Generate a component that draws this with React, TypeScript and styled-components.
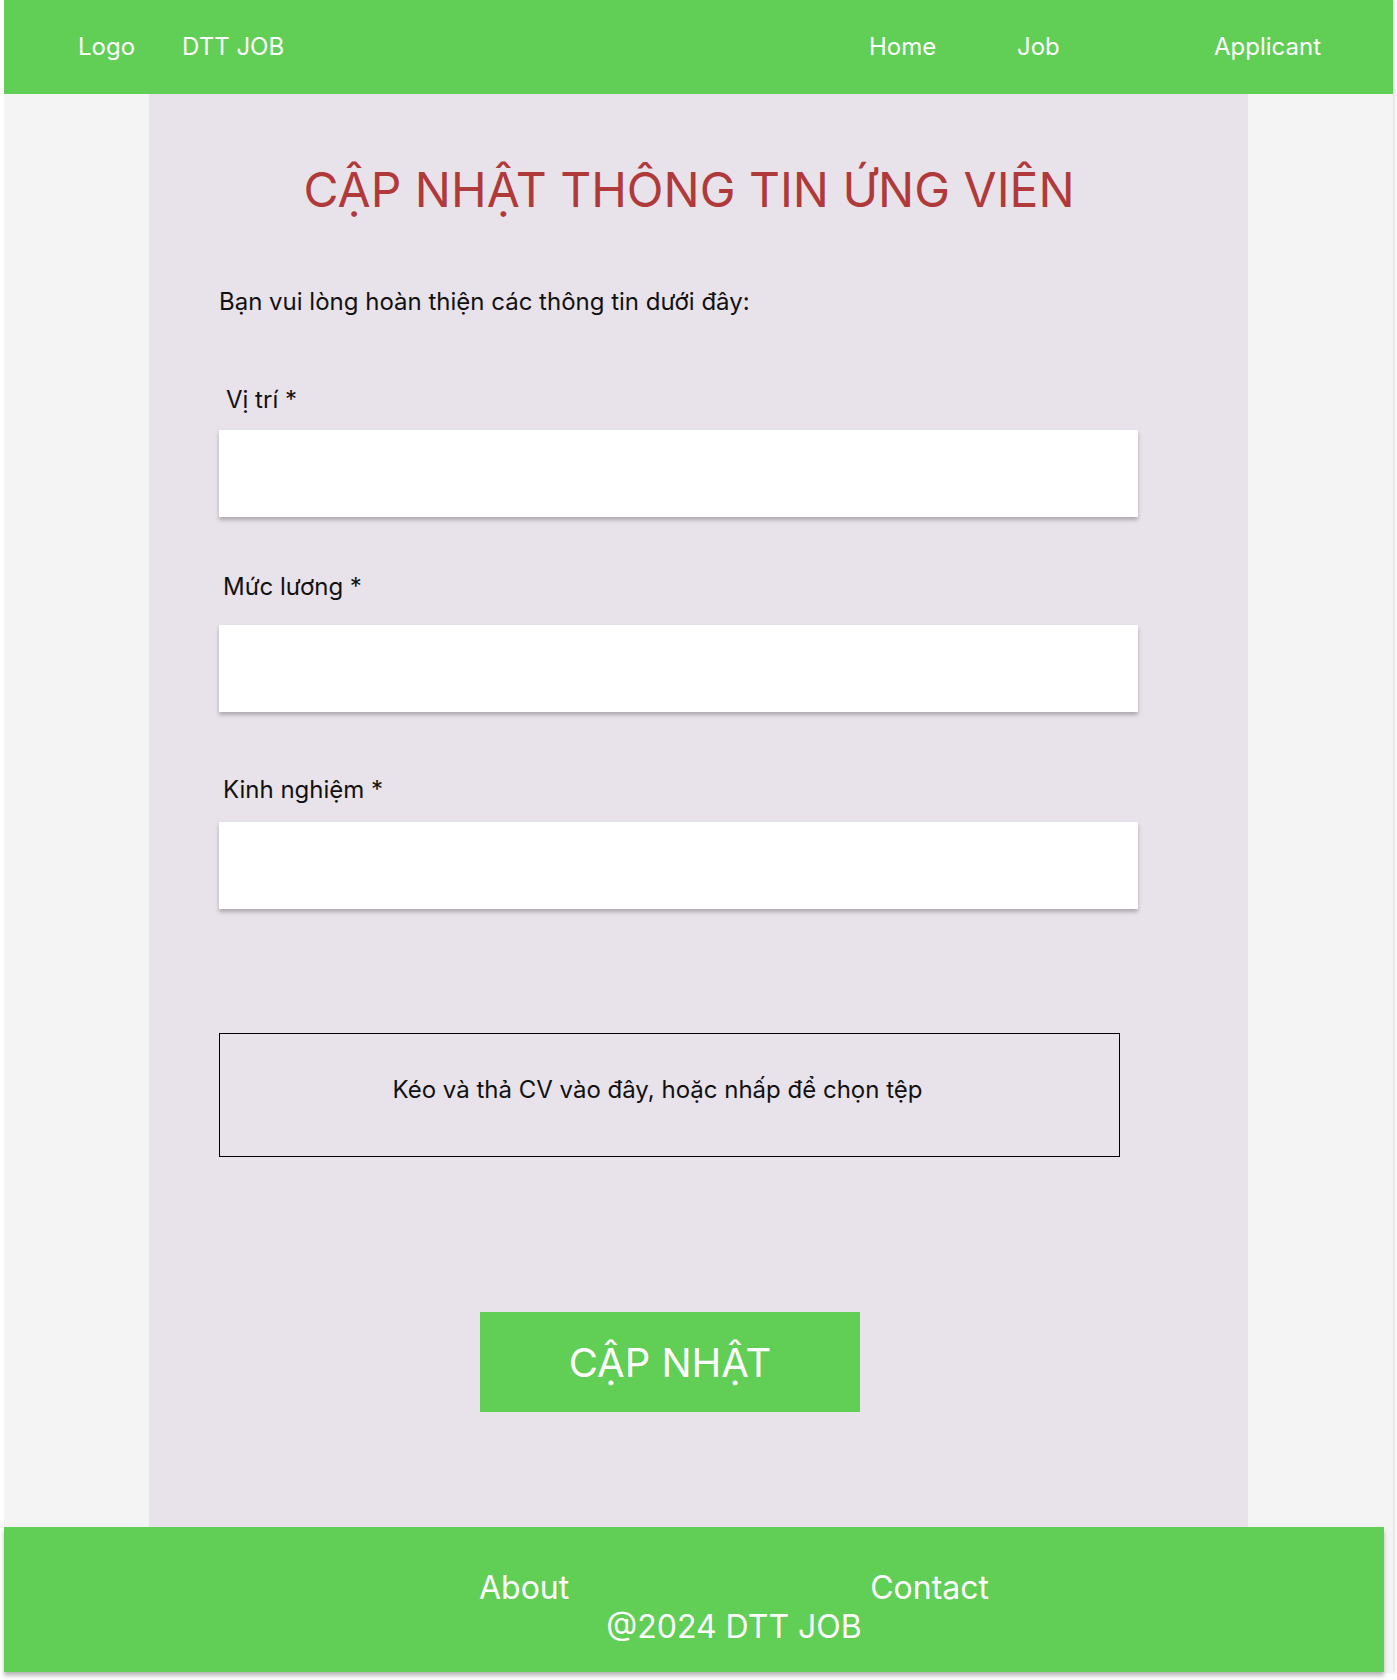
import React from 'react'
import styled, { createGlobalStyle } from 'styled-components'

const GREEN = '#61ce55'
const LAVENDER = '#e8e2ea'
const SIDE = '#f4f4f4'

const GlobalStyle = createGlobalStyle`
  html, body {
    margin: 0;
    padding: 0;
    background: #ffffff;
    font-family: Inter, "Noto Sans", "Liberation Sans", sans-serif;
  }
  * {
    box-sizing: border-box;
  }
`

const Page = styled.div`
  padding-left: 4px;
  min-height: 1680px;
`

const Frame = styled.div`
  width: 1389px;
  background: ${SIDE};
  box-shadow: 2px 0 3px rgba(0, 0, 0, 0.12);
`

const Header = styled.header`
  display: flex;
  align-items: center;
  justify-content: space-between;
  height: 94px;
  padding: 0 72px 2px 74px;
  background: ${GREEN};
  color: #ffffff;
  font-size: 24px;
`

const Brand = styled.div`
  display: flex;
  align-items: center;
  gap: 47px;
`

const Nav = styled.nav`
  display: grid;
  grid-template-columns: 148px 197px auto;
  align-items: center;
`

const NavItem = styled.span`
  cursor: pointer;
  white-space: nowrap;
`

const Panel = styled.main`
  width: 1099px;
  height: 1433px;
  margin: 0 auto;
  padding: 67px 0 0 70px;
  background: ${LAVENDER};
`

const Title = styled.h1`
  width: 919px;
  margin: 0;
  padding-left: 21px;
  text-align: center;
  font-size: 48px;
  font-weight: 400;
  line-height: 58px;
  color: #b03a3a;
`

const Intro = styled.p`
  margin: 68px 0 0 0;
  font-size: 24px;
  line-height: 29px;
  color: #111111;
`

const Field = styled.div<{ $top: number; $gap: number }>`
  margin-top: ${p => p.$top}px;
  display: flex;
  flex-direction: column;
  gap: ${p => p.$gap}px;
`

const Label = styled.label<{ $indent: number }>`
  padding-left: ${p => p.$indent}px;
  font-size: 24px;
  line-height: 29px;
  color: #111111;
`

const Input = styled.input`
  width: 919px;
  height: 87px;
  border: none;
  outline: none;
  background: #ffffff;
  box-shadow: 0 3px 4px rgba(0, 0, 0, 0.25);
  font-family: inherit;
  font-size: 20px;
  padding: 0 16px;
`

const DropZone = styled.div`
  width: 901px;
  height: 124px;
  margin-top: 124px;
  padding: 0 24px 12px 0;
  border: 1px solid #000000;
  display: flex;
  align-items: center;
  justify-content: center;
  font-size: 24px;
  color: #111111;
  cursor: pointer;
`

const SubmitButton = styled.button`
  display: block;
  width: 380px;
  height: 100px;
  margin: 155px 0 0 261px;
  border: none;
  background: ${GREEN};
  color: #ffffff;
  font-family: inherit;
  font-size: 40px;
  cursor: pointer;
`

const Footer = styled.footer`
  width: 1380px;
  height: 145px;
  padding: 14px 0 0 80px;
  display: flex;
  flex-direction: column;
  align-items: center;
  justify-content: center;
  background: ${GREEN};
  color: #ffffff;
  font-size: 32px;
  line-height: 39px;
  box-shadow: 0 4px 4px rgba(0, 0, 0, 0.25);
`

const FooterLinks = styled.div`
  display: flex;
  gap: 301px;
`

const fields = [
  { label: 'Vị trí *', top: 69, gap: 16, indent: 7 },
  { label: 'Mức lương *', top: 55, gap: 24, indent: 4 },
  { label: 'Kinh nghiệm *', top: 63, gap: 18, indent: 4 }
]

export default function App() {
  return (
    <Page>
      <GlobalStyle />
      <Frame>
        <Header>
          <Brand>
            <NavItem>Logo</NavItem>
            <NavItem>DTT JOB</NavItem>
          </Brand>
          <Nav>
            <NavItem>Home</NavItem>
            <NavItem>Job</NavItem>
            <NavItem>Applicant</NavItem>
          </Nav>
        </Header>

        <Panel>
          <Title>CẬP NHẬT THÔNG TIN ỨNG VIÊN</Title>
          <Intro>Bạn vui lòng hoàn thiện các thông tin dưới đây:</Intro>

          {fields.map(f => (
            <Field key={f.label} $top={f.top} $gap={f.gap}>
              <Label $indent={f.indent}>{f.label}</Label>
              <Input />
            </Field>
          ))}

          <DropZone>Kéo và thả CV vào đây, hoặc nhấp để chọn tệp</DropZone>

          <SubmitButton>CẬP NHẬT</SubmitButton>
        </Panel>

        <Footer>
          <FooterLinks>
            <span>About</span>
            <span>Contact</span>
          </FooterLinks>
          <span>@2024 DTT JOB</span>
        </Footer>
      </Frame>
    </Page>
  )
}
